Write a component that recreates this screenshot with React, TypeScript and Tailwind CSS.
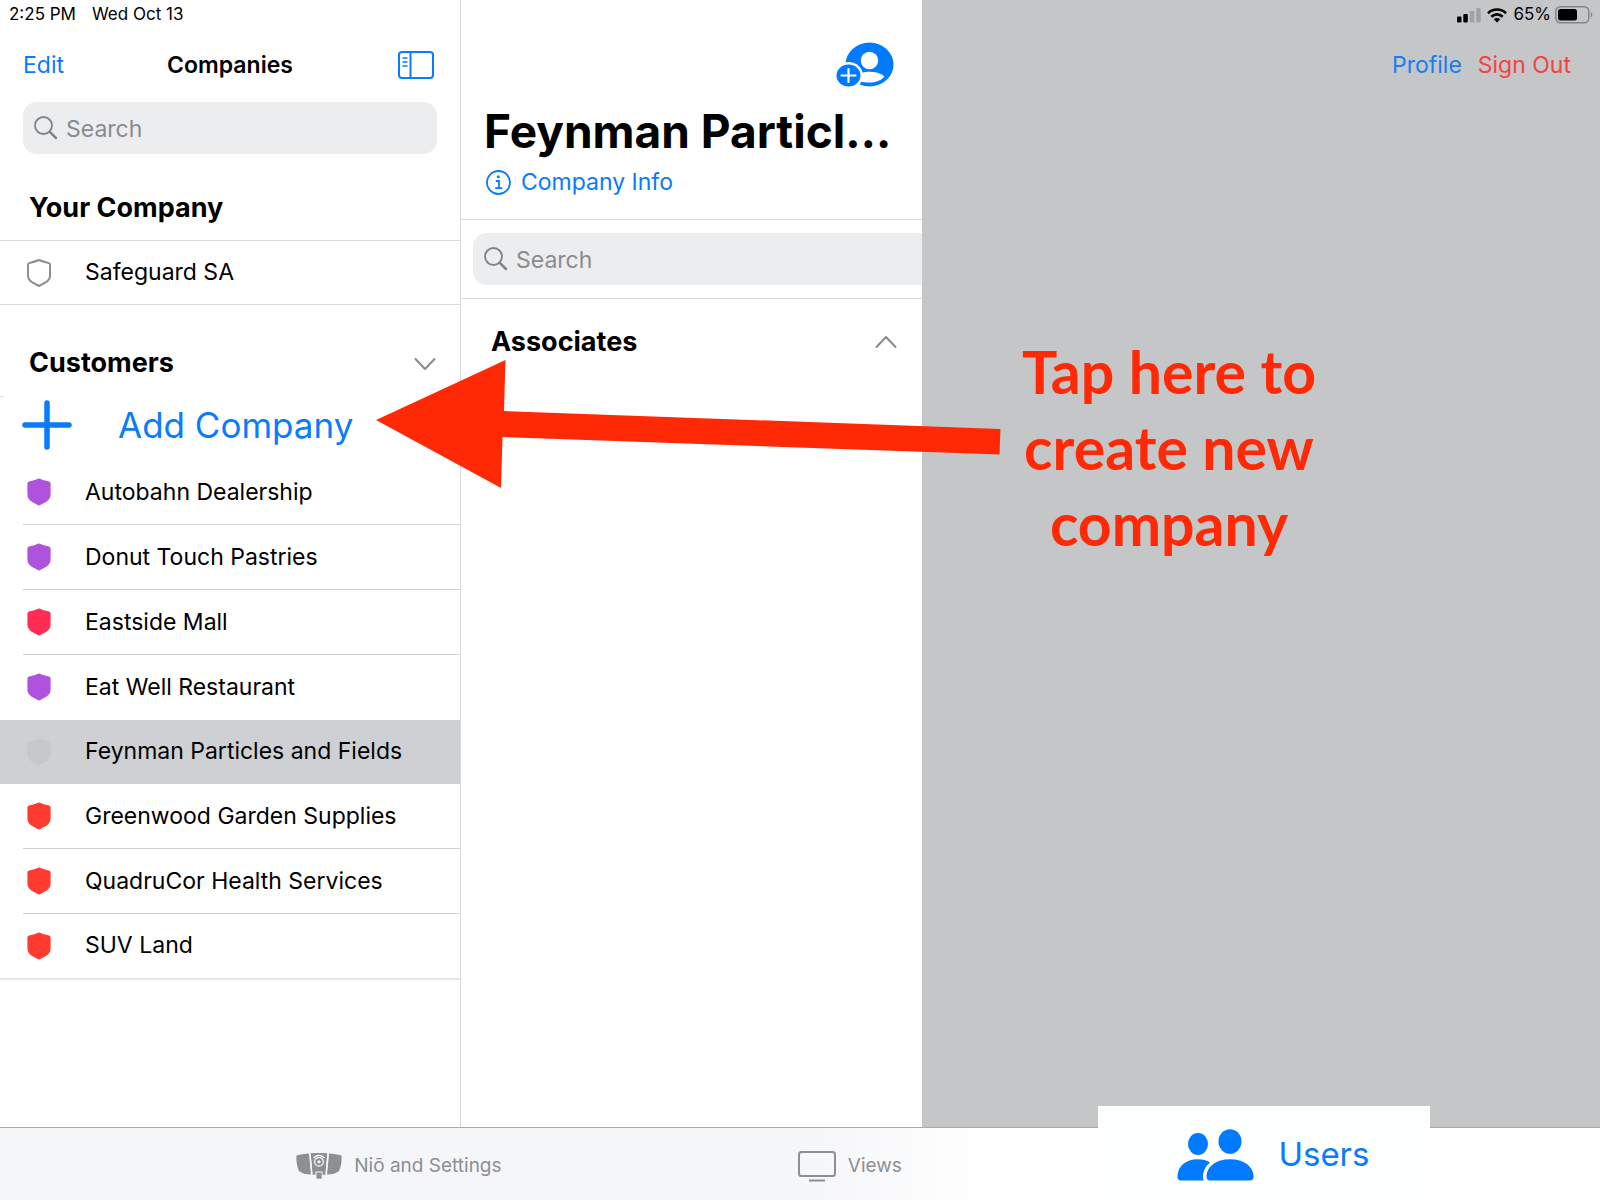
import React from "react";

type Company = { name: string; color: string; selected?: boolean };

const customers: Company[] = [
  { name: "Autobahn Dealership", color: "text-[#af52de]" },
  { name: "Donut Touch Pastries", color: "text-[#af52de]" },
  { name: "Eastside Mall", color: "text-[#ff2d55]" },
  { name: "Eat Well Restaurant", color: "text-[#af52de]" },
  { name: "Feynman Particles and Fields", color: "text-[#c7c8cb]", selected: true },
  { name: "Greenwood Garden Supplies", color: "text-[#ff3b30]" },
  { name: "QuadruCor Health Services", color: "text-[#ff3b30]" },
  { name: "SUV Land", color: "text-[#ff3b30]" },
];

function Shield({ outline = false }: { outline?: boolean }) {
  return (
    <svg
      width="24"
      height="28"
      viewBox="0 0 24 28"
      className="shrink-0"
      fill={outline ? "none" : "currentColor"}
      stroke="currentColor"
      strokeWidth={outline ? "2" : "1.2"}
      strokeLinejoin="round"
      aria-hidden="true"
    >
      <path d="M12 1C9 2.200 5 3.400 2.200 4.100C1.400 4.300 1 4.800 1 5.600V16.500C1 19.500 2.400 21.500 5 23.200L12 27L19 23.200C21.600 21.500 23 19.500 23 16.500V5.600C23 4.800 22.600 4.300 21.800 4.100C19 3.400 15 2.200 12 1Z" />
    </svg>
  );
}

function SearchField({ id, className }: { id: string; className: string }) {
  return (
    <div className={`flex h-[52px] items-center bg-[#ecedef] pl-[11px] ${className}`}>
      <label htmlFor={id} className="shrink-0">
        <svg width="24" height="24" viewBox="0 0 24 24" fill="none" stroke="#828387" role="img" aria-label="Search">
          <circle cx="9.500" cy="9.500" r="8.500" strokeWidth="1.800" />
          <path d="M15.800 15.800L22 22" strokeWidth="2.500" strokeLinecap="round" />
        </svg>
      </label>
      <input
        id={id}
        type="search"
        placeholder="Search"
        className="ml-2 h-full w-full min-w-0 bg-transparent pt-px text-[23px] text-black outline-none placeholder:text-[#8a8b8f]"
      />
    </div>
  );
}

function Chevron({ up = false }: { up?: boolean }) {
  return (
    <svg
      width="22"
      height="14"
      viewBox="0 0 22 14"
      fill="none"
      stroke="#8a8a8e"
      strokeWidth="2"
      strokeLinecap="round"
      strokeLinejoin="round"
      aria-hidden="true"
    >
      <path d={up ? "M1.500 12L11 2L20.500 12" : "M1.500 2L11 12L20.500 2"} />
    </svg>
  );
}

function CompaniesColumn() {
  return (
    <aside className="w-[461px] shrink-0 border-r border-[#d8d8da] bg-white">
      <div className="flex h-7 items-center gap-4 pt-[2px] pl-[9px] text-[17px]">
        <span>2:25 PM</span>
        <span>Wed Oct 13</span>
      </div>
      <header className="grid h-[74px] grid-cols-[1fr_auto_1fr] items-center px-[23px] text-[23px]">
        <button className="justify-self-start text-[#0a7aff]">Edit</button>
        <h1 className="font-semibold">Companies</h1>
        <button className="mr-[3px] justify-self-end text-[#0a7aff]" aria-label="Toggle sidebar">
          <svg width="36" height="28" viewBox="0 0 36 28" fill="none" stroke="currentColor" strokeWidth="2" aria-hidden="true">
            <rect x="1" y="1" width="34" height="26" rx="3" />
            <path d="M12.500 1V27" />
            <path d="M4.500 7H9.500M4.500 11H9.500M4.500 15H9.500" strokeWidth="1.500" />
          </svg>
        </button>
      </header>
      <SearchField id="company-search" className="mx-[23px] rounded-[14px]" />

      <h2 className="flex h-[86px] items-end pb-[14px] pl-[29px] text-[27px] leading-9 font-bold">Your Company</h2>
      <button className="flex h-[65px] w-full items-center border-y border-[#dcdcde] pl-[27px] text-[23px]">
        <span className="text-[#8e8e92]">
          <Shield outline />
        </span>
        <span className="ml-[34px]">Safeguard SA</span>
      </button>

      <div className="flex h-[91px] items-end justify-between pr-6 pb-[15px] pl-[29px]">
        <h2 className="text-[27px] leading-9 font-bold">Customers</h2>
        <button className="pb-[10px]" aria-label="Collapse customers">
          <Chevron />
        </button>
      </div>
      <div className="h-px w-1 bg-[#dcdcde]" />
      <button className="flex h-[63px] items-start pt-[3px] pl-[22px] text-[35px] leading-[50px] text-[#0a7aff]">
        <svg width="50" height="50" viewBox="0 0 50 50" stroke="currentColor" strokeWidth="5.500" strokeLinecap="round" aria-hidden="true">
          <path d="M25 3V47M3 25H47" />
        </svg>
        <span className="ml-[46px]">Add Company</span>
      </button>
      <ul className="border-b-2 border-[#e6e6e8]">
        {customers.map((c, i) => {
          const last = i === customers.length - 1;
          const noLine = c.selected || customers[i + 1]?.selected || last;
          return (
            <li key={c.name} className={c.selected ? "bg-[#cfd0d4]" : ""}>
              <button className={`flex w-full pl-[23px] text-left text-[23px] ${c.selected || last ? "h-16" : "h-[65px]"}`}>
                <span
                  className={`flex grow items-center self-stretch border-b pl-1 ${noLine ? "border-transparent" : "border-[#d0d0d2]"}`}
                >
                  <span className={c.color}>
                    <Shield />
                  </span>
                  <span className="ml-[34px]">{c.name}</span>
                </span>
              </button>
            </li>
          );
        })}
      </ul>
    </aside>
  );
}

function AddPersonIcon() {
  return (
    <svg width="58" height="46" viewBox="0 0 58 46" aria-hidden="true">
      <ellipse cx="33.500" cy="22.500" rx="24" ry="22" fill="#007aff" />
      <ellipse cx="33.500" cy="18.500" rx="8.700" ry="8.700" fill="#fff" />
      <path d="M18 36C22 31 28 29.700 33.500 29.700C39 29.700 44.500 31 48.500 34.500C45 38.500 39.500 40.600 33.500 40.600C27 40.600 22 39.500 18 36Z" fill="#fff" />
      <ellipse cx="12.500" cy="33.500" rx="14.500" ry="13.500" fill="#fff" />
      <ellipse cx="12.500" cy="33.500" rx="12" ry="11" fill="#007aff" />
      <path d="M12.500 27V40M5.500 33.500H19.500" stroke="#fff" strokeWidth="2.200" strokeLinecap="round" />
    </svg>
  );
}

function AssociatesColumn() {
  return (
    <section className="w-[461px] shrink-0 bg-white pt-7">
      <div className="flex h-[74px] items-center justify-end pr-7">
        <button aria-label="Add associate">
          <AddPersonIcon />
        </button>
      </div>
      <h1 className="h-[60px] pl-[23px] text-[46px] leading-[58px] font-bold whitespace-nowrap">Feynman Particl…</h1>
      <button className="ml-[25px] flex h-10 items-center gap-[10px] text-[23px] text-[#0a7aff]">
        <svg width="25" height="25" viewBox="0 0 25 25" fill="none" stroke="currentColor" strokeWidth="1.800" aria-hidden="true">
          <circle cx="12.500" cy="12.500" r="11.500" />
          <circle cx="12.300" cy="6.800" r="1.500" fill="currentColor" stroke="none" />
          <path d="M9.800 11H13V18M9.200 18.200H16.300" />
        </svg>
        Company Info
      </button>
      <div className="mt-[17px] border-y border-[#dcdcde] py-[13px] pl-3">
        <SearchField id="associate-search" className="rounded-l-[14px]" />
      </div>
      <div className="flex h-[86px] items-center justify-between pr-[25px] pl-[30px]">
        <h2 className="text-[27px] leading-9 font-bold">Associates</h2>
        <button aria-label="Expand associates">
          <Chevron up />
        </button>
      </div>
    </section>
  );
}

function DetailColumn() {
  return (
    <main className="min-w-0 grow bg-[#c5c6c8]">
      <div className="flex h-7 items-center justify-end pt-[2px] pr-[7px] text-[17px]">
        <svg width="24" height="16" viewBox="0 0 24 16" aria-hidden="true">
          <rect x="0" y="9.500" width="4.500" height="6" rx="1" />
          <rect x="6.300" y="7" width="4.500" height="8.500" rx="1" />
          <rect x="12.800" y="4" width="4.500" height="11.500" rx="1" fill="#a1a2a4" />
          <rect x="19.200" y="1" width="4.500" height="14.500" rx="1" fill="#a1a2a4" />
        </svg>
        <svg width="20" height="15" viewBox="0 0 20 15" className="mx-[6px]" fill="none" stroke="#000" strokeWidth="2.600" aria-hidden="true">
          <path d="M1 5.200C6 0.300 14 0.300 19 5.200" />
          <path d="M4.300 8.700C7.600 5.600 12.400 5.600 15.700 8.700" />
          <path d="M10 14.500L6.700 11.200C8.600 9.600 11.400 9.600 13.300 11.200Z" fill="#000" stroke="none" />
        </svg>
        <span>65%</span>
        <svg width="38" height="18" viewBox="0 0 38 18" className="ml-1" aria-hidden="true">
          <rect x="0.800" y="0.800" width="33" height="16" rx="4.500" fill="none" stroke="#848587" strokeWidth="1.500" />
          <rect x="3" y="3" width="19" height="11.600" rx="2.500" />
          <path d="M35.800 6C37.800 7 37.800 10.500 35.800 11.500Z" fill="#848587" />
        </svg>
      </div>
      <div className="flex h-[74px] items-center justify-end gap-4 pr-[29px] text-[23px]">
        <button className="text-[#1a7df0]">Profile</button>
        <button className="text-[#f2453d]">Sign Out</button>
      </div>
      <p className="mt-[232px] ml-[90px] w-[314px] text-center font-[Lato,sans-serif] text-[59px] leading-[76px] font-bold text-[#ff2a05]">
        Tap here to
        <br />
        create new
        <br />
        company
      </p>
    </main>
  );
}

function DeviceIcon() {
  return (
    <svg width="46" height="26" viewBox="0 0 46 26" aria-hidden="true">
      <path d="M0.500 2.500C4 1.400 8.500 0.700 13 0.400L15 21.500C10 21.500 5.500 20.500 3 18C1 14 0 8 0.500 2.500Z" fill="#8e8f93" />
      <path d="M45.500 2.500C42 1.400 37.500 0.700 33 0.400L31 21.500C36 21.500 40.500 20.500 43 18C45 14 46 8 45.500 2.500Z" fill="#8e8f93" />
      <path d="M14.600 0.300C20 0 26 0 31.400 0.300L29.500 21.700H26.500V18.500H19.500V21.700H16.500Z" fill="#8e8f93" />
      <rect x="20.500" y="19.500" width="5.200" height="6.200" fill="#8e8f93" />
      <g fill="none" stroke="#f5f6f8" strokeWidth="1.300">
        <path d="M14 0.300L15.900 21.500M32 0.300L30.100 21.500" />
        <circle cx="23" cy="8.800" r="4.300" />
        <path d="M17.600 5.200A6.600 6.600 0 0 1 28.400 5.200" />
      </g>
      <circle cx="23" cy="8.800" r="1.600" fill="#f5f6f8" />
    </svg>
  );
}

function TabBar() {
  return (
    <nav className="flex h-[73px] items-start border-t border-[#a9aaac] bg-linear-to-r from-[#f5f6f8] from-50% to-white to-62% text-[19px] text-[#8e8f93]">
      <div className="grow-[297] basis-0" />
      <button className="flex h-[76px] items-center gap-3">
        <DeviceIcon />
        <span>Niō and Settings</span>
      </button>
      <div className="grow-[297] basis-0" />
      <button className="flex h-[76px] items-center gap-3">
        <svg width="38" height="31" viewBox="0 0 38 31" fill="none" stroke="currentColor" strokeWidth="2" aria-hidden="true">
          <rect x="1" y="1" width="36" height="24" rx="2.500" />
          <path d="M11 29.500H27" />
        </svg>
        <span>Views</span>
      </button>
      <div className="grow-[197] basis-0" />
      <button className="-mt-[22px] flex h-[94px] w-[332px] items-center gap-6 bg-[#fdfefe] pt-[3px] pl-[79px] text-[33px] text-[#0a7aff]">
        <svg width="77" height="52" viewBox="0 0 77 52" fill="#007aff" aria-hidden="true">
          <ellipse cx="21" cy="15" rx="10" ry="11" />
          <ellipse cx="53" cy="12.500" rx="11.500" ry="12.300" />
          <path d="M0.500 47C1 37 9 30.300 20.500 30.300C25.500 30.300 30 31.500 33 33.500C28.500 37 26 42.500 26 47.500C26 49 26.200 50.500 27 51.500H4C1.500 51.500 0.300 49.800 0.500 47Z" />
          <path d="M29.500 47C30 37.500 39 30.300 53 30.300C67 30.300 76 37.500 76.500 47C76.600 50 75.300 51.500 73 51.500H33C30.700 51.500 29.400 50 29.500 47Z" />
        </svg>
        <span>Users</span>
      </button>
      <div className="grow-[170] basis-0" />
    </nav>
  );
}

export default function App() {
  return (
    <div className="relative flex min-h-screen flex-col bg-white font-[Inter,sans-serif] text-black">
      <div className="flex grow">
        <CompaniesColumn />
        <AssociatesColumn />
        <DetailColumn />
      </div>
      <TabBar />
      <svg
        width="626"
        height="130"
        viewBox="0 0 626 130"
        className="pointer-events-none absolute top-[359px] left-[375px]"
        aria-hidden="true"
      >
        <path d="M1 61L130.500 1L129 52L625.500 70L624.500 95.500L127.500 78L126 129Z" fill="#ff2a05" />
      </svg>
    </div>
  );
}
